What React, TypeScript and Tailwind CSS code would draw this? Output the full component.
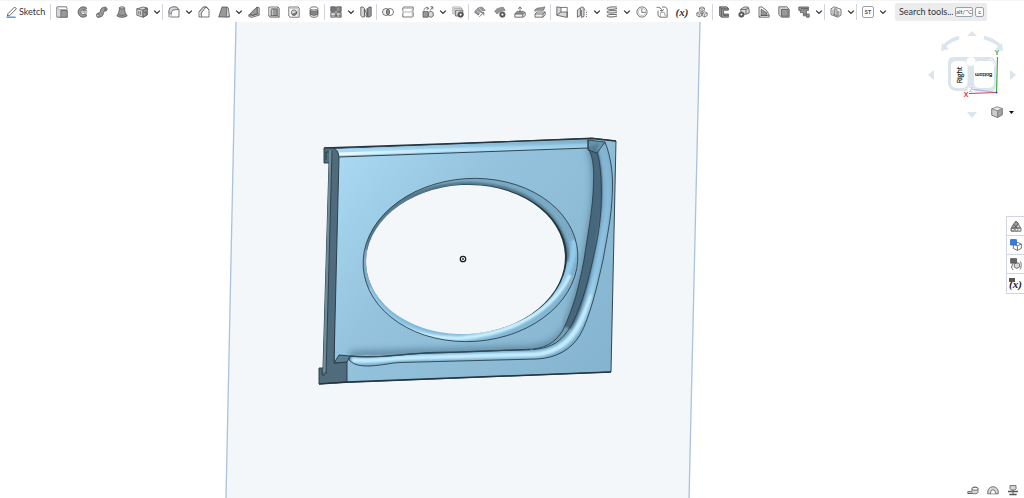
import type { ReactNode } from 'react';

const DARK = '#555';
const MID = '#999';
const LIGHT = '#d8d8d8';

interface Tool {
  name: string;
  icon: ReactNode;
  menu?: boolean;
}

function Icon({ children }: { children: ReactNode }) {
  return (
    <svg viewBox="0 0 12 12" className="w-3 h-3" fill="none" stroke={DARK} strokeWidth="0.8" strokeLinejoin="round" aria-hidden="true">
      {children}
    </svg>
  );
}

const groups: Tool[][] = [
  [
    {
      name: 'Extrude',
      icon: (
        <>
          <path d="M0.8 11.2V1.5Q0.8 0.8 1.5 0.8H10.5L11.2 3" />
          <path d="M0.8 1.5L3.5 4M3 11V3.5H11.2" stroke={MID} />
          <path d="M4.8 4.5H11.3V11.3H4.8Z" fill={MID} />
          <path d="M1 11.2H5" />
        </>
      ),
    },
    {
      name: 'Revolve',
      icon: (
        <>
          <path d="M10.8 2.2A5.2 5.2 0 1 0 10.8 9.8L8.8 8.2A2.6 2.6 0 1 1 8.8 3.8Z" fill={MID} />
          <path d="M6 6H11.3M6.5 4.5L11 4.2M8 8H11" strokeWidth="0.8" />
        </>
      ),
    },
    {
      name: 'Sweep',
      icon: (
        <>
          <path d="M0.6 8.2C2 6.6 4 7.4 4.4 5C4.8 2 6.5 1 9.6 1.2L11.4 2.8L10.2 5C7.5 4.6 7.8 6 7.3 8C6.7 10.8 4 11.4 1.6 11.2Z" fill={MID} />
          <path d="M9.4 1.2L8.8 4.6" />
          <ellipse cx="1.9" cy="9.6" rx="1.3" ry="1.6" fill={LIGHT} />
        </>
      ),
    },
    {
      name: 'Loft',
      icon: (
        <>
          <path d="M3.4 1.8C3.4 5 2.6 8 0.8 9.8C3 11.8 9 11.8 11.2 9.8C9.4 8 8.6 5 8.6 1.8Z" fill={MID} />
          <ellipse cx="6" cy="1.9" rx="2.6" ry="1.1" fill={LIGHT} />
          <path d="M2 8.5Q6 10.5 10 8.5" strokeWidth="0.6" />
        </>
      ),
    },
    {
      name: 'Thicken',
      menu: true,
      icon: (
        <>
          <path d="M0.8 2.8L7.5 1L11.2 2L11.2 9L7 11.2L0.8 9.2Z" fill={LIGHT} />
          <path d="M0.8 2.8L7 4.2L11.2 2M7 4.2V11.2" />
          <path d="M7 4.2L11.2 2V9L7 11.2Z" fill={MID} />
          <path d="M2.8 5V8.4M4.6 5.4V8.8M8.2 6.5L10 5.8V8.2" />
        </>
      ),
    },
  ],
  [
    {
      name: 'Fillet',
      menu: true,
      icon: (
        <>
          <path d="M1 11V5Q1 1 5 1H8.6L11 3.6V11H3.2" />
          <path d="M1 11H3.2V7.4Q3.2 3.6 7 3.6H11" stroke={MID} />
          <path d="M1 5.4Q1 1 5.4 1H8.4L10.6 3.6H7Q3.2 3.6 3.2 8L1 7Z" fill={LIGHT} strokeWidth="0.6" />
        </>
      ),
    },
    {
      name: 'Chamfer',
      icon: (
        <>
          <path d="M1 11V6L5.4 1H8.8L11 4V11Z" />
          <path d="M1 6L5.4 1H8L3.4 7V11" fill={LIGHT} />
          <path d="M8 1L11 4" />
        </>
      ),
    },
    {
      name: 'Draft',
      menu: true,
      icon: (
        <>
          <path d="M4 1H9L11.3 11H0.7Z" fill={MID} />
          <path d="M9 1L10.4 2L11.4 10.6L8.2 11Z" fill={LIGHT} strokeWidth="0.7" />
        </>
      ),
    },
    {
      name: 'Rib',
      icon: (
        <>
          <path d="M0.8 8.8L9 6.6V1L11.2 1.8V9.2L3.4 11.4L0.8 10.4Z" fill={LIGHT} />
          <path d="M9 1.2C8.2 2.4 4 4.6 2.2 8L4.6 9.4L9.4 7.8Z" fill={MID} />
          <path d="M1 8.8L3.6 9.8L11 7.6" strokeWidth="0.7" />
        </>
      ),
    },
    {
      name: 'Shell',
      icon: (
        <>
          <path d="M0.8 1H10L11.2 2.2V11.2H2L0.8 10Z" />
          <path d="M3 2.8H9.2V9.6H3Z" fill={MID} />
          <path d="M3 2.8L4.4 4V9.6" stroke={LIGHT} />
          <path d="M10 1V10H0.8M10 10L11.2 11.2" strokeWidth="0.6" />
        </>
      ),
    },
    {
      name: 'Hole',
      icon: (
        <>
          <path d="M0.8 1H10L11.2 2.2V11.2H2L0.8 10Z" />
          <path d="M2 2.6H9.8V10" stroke={MID} strokeWidth="0.6" />
          <circle cx="6" cy="6.6" r="2.7" fill={LIGHT} />
          <path d="M4 8.4A2.7 2.7 0 0 0 8.6 6.2Q7 7.6 4 8.4Z" fill={MID} />
        </>
      ),
    },
    {
      name: 'External thread',
      icon: (
        <>
          <path d="M2.2 2.4V9.6C2.2 11.8 9.8 11.8 9.8 9.6V2.4" fill="#f0f0f0" />
          <path d="M2.2 4.6Q6 6.6 9.8 4.6V8.4Q6 10.4 2.2 8.4Z" fill={MID} />
          <ellipse cx="6" cy="2.4" rx="3.8" ry="1.6" fill="#fff" />
          <path d="M2.2 6.4Q6 8.4 9.8 6.4" strokeWidth="0.6" />
        </>
      ),
    },
  ],
  [
    {
      name: 'Linear pattern',
      menu: true,
      icon: (
        <>
          <path d="M0.8 0.8H5.4V5.4H0.8Z" fill="#777" />
          <path d="M6.6 0.8H11.2V5.4H6.6Z" fill={MID} />
          <path d="M0.8 6.6H5.4V11.2H0.8ZM6.6 6.6H11.2V11.2H6.6Z" fill={LIGHT} />
          <path d="M0.8 9.8H11.2M9.9 1V11" strokeWidth="0.6" />
        </>
      ),
    },
    {
      name: 'Mirror',
      icon: (
        <>
          <path d="M0.8 1H3L4.4 2.4V11H2.2L0.8 9.6Z" fill={LIGHT} />
          <path d="M4.6 3L7.2 9.8V2.4L7.2 11.2L4.6 9Z" />
          <path d="M7.8 2.4L9.2 1H11.2V9.6L9.8 11H7.8Z" fill={MID} />
        </>
      ),
    },
  ],
  [
    {
      name: 'Boolean',
      icon: (
        <>
          <circle cx="4" cy="6" r="3.5" fill="#eee" />
          <circle cx="8" cy="6" r="3.5" />
          <path d="M6 3.1A3.5 3.5 0 0 1 6 8.9A3.5 3.5 0 0 1 6 3.1Z" fill={MID} />
        </>
      ),
    },
    {
      name: 'Split',
      icon: (
        <>
          <path d="M0.8 5V1.8L2 1H11.2V4M0.8 7.4V11H10.4L11.2 10.2V6.6" />
          <path d="M0.8 6.6C4 4.6 7 7.8 11.2 4.6" stroke={MID} />
          <path d="M1 2.4H10.2V10.4M1 5V8M11.2 4V7" stroke={MID} strokeWidth="0.6" />
        </>
      ),
    },
    {
      name: 'Transform',
      menu: true,
      icon: (
        <>
          <path d="M1 5.6H6.2V11.2H1Z" fill={MID} />
          <path d="M6.4 6.6L8.8 5.2L11.2 6.6V10L8.8 11.4L6.4 10Z" fill={LIGHT} />
          <path d="M2 4.6C2 2 4.4 0.8 6.6 2.4M5 0.8L6.8 2.6L4.6 3.4" />
          <path d="M8 4.6L10.6 1M10.8 3.4V0.8H8.4" />
        </>
      ),
    },
    {
      name: 'Delete part',
      icon: (
        <>
          <path d="M0.8 8V1H8.6L10 3" stroke={MID} />
          <path d="M2.2 9V2.6H9.8L10.4 4.4" stroke={MID} />
          <path d="M3.6 4.2H10.8V10H3.6Z" fill={LIGHT} />
          <circle cx="8.6" cy="8.6" r="2.7" fill={DARK} />
          <circle cx="8.6" cy="8.6" r="1.1" fill="#fff" stroke="none" />
        </>
      ),
    },
  ],
  [
    {
      name: 'Modify fillet',
      icon: (
        <>
          <path d="M0.6 6.4C2 2.6 5 0.8 8.2 1.2L11.2 4.4C8 4.4 5.4 6 4.4 9.2Z" fill={MID} strokeWidth="0.5" />
          <path d="M2.4 4.2L6 7.2M5 2.2L8.2 5.2" stroke={LIGHT} />
          <path d="M5.4 10.8L9.6 6.6M7 6.6H9.8V9.4" />
        </>
      ),
    },
    {
      name: 'Delete face',
      icon: (
        <>
          <path d="M0.6 5C3 3.6 5 1 9.4 1.4L11.2 4.6C7.4 4.4 5 6.4 3 8Z" fill={MID} strokeWidth="0.5" />
          <path d="M2 3.2L9 1.2" stroke={MID} />
          <circle cx="8.4" cy="8.6" r="2.7" fill={DARK} />
          <circle cx="8.4" cy="8.6" r="1.1" fill="#fff" stroke="none" />
        </>
      ),
    },
    {
      name: 'Move face',
      icon: (
        <>
          <path d="M0.8 8L3 5.4H9.4L11.2 6.6V9.6L9 11.2H0.8Z" fill="#eee" />
          <path d="M0.8 8H8.8L11.2 6.6M8.8 8V11" />
          <path d="M2.6 6.4H9.4L8.6 7.6H1.6Z" fill={MID} strokeWidth="0.5" />
          <path d="M6 6V1M4.2 2.8L6 0.8L7.8 2.8" />
        </>
      ),
    },
    {
      name: 'Replace face',
      icon: (
        <>
          <path d="M0.8 4C3 1 6 2.4 11 0.8L9.6 4.2C6.6 5 4 3.4 0.8 5.4Z" fill={MID} strokeWidth="0.5" />
          <path d="M1 8L3 6H11.2V9L9 11.2H1Z" fill="#eee" />
          <path d="M1 8H9L11.2 6M9 8V11.2" />
        </>
      ),
    },
  ],
  [
    {
      name: 'Plane',
      icon: (
        <>
          <path d="M0.8 0.8L5 1.6V6H11.2V11.4L6 10.4L0.8 9.2Z" fill={LIGHT} />
          <path d="M5 1.4H11.2V11.2M0.8 9L5 6" />
        </>
      ),
    },
    {
      name: 'Enclose',
      menu: true,
      icon: (
        <>
          <path d="M1.4 11.2V4L4.4 1.8V9.6Z" fill={LIGHT} />
          <path d="M4.4 2L6 0.8L8 2V10.4L5.4 11.4V4" fill={LIGHT} />
          <path d="M8.2 3L10.4 5V11" strokeDasharray="1 1" />
        </>
      ),
    },
    {
      name: 'Helix',
      menu: true,
      icon: (
        <path
          d="M10.8 1C4 0.6 0.6 1.6 1 2.6C1.6 3.8 8 3.4 11 2.6M10.8 4.8C4 4.4 0.6 5 1 6.2C1.6 7.4 8 7.2 11 6.2M10.8 8.6C4 8 0.6 9 1 10C1.6 11.4 8 11.2 11 10"
          strokeWidth="1"
        />
      ),
    },
    {
      name: 'Measure curve',
      icon: (
        <>
          <circle cx="6" cy="6" r="5.1" />
          <path d="M5.8 2.6V6.4H9.4" />
          <circle cx="6" cy="6" r="3.7" stroke={MID} strokeWidth="0.5" />
        </>
      ),
    },
    {
      name: 'Import',
      icon: (
        <>
          <path d="M2 4.6V9.6L4.4 11.2H11.2V3L9.4 1H6" />
          <path d="M4.4 11.2V6.4H8.6V9.2H11" stroke={MID} />
          <path d="M0.6 1.4C3.4 0.8 5.6 2.2 6 5M4 4.2L6.2 5.4L7.6 3.2" />
        </>
      ),
    },
    { name: 'Variable', icon: null },
    {
      name: 'Composite part',
      icon: (
        <>
          <path d="M6 0.8L8.4 2V4.4L6 5.6L3.6 4.4V2ZM3.4 5.8L5.8 7V9.6L3.2 11L0.8 9.6V7ZM8.6 5.8L11.2 7V9.6L8.6 11L6.2 9.6V7Z" fill="#f2f2f2" strokeWidth="0.7" />
          <path d="M3.6 2L6 3.2L8.4 2M6 3.2V5.6M0.8 7L3.2 8.2L5.8 7M3.2 8.2V11M6.2 7L8.6 8.2L11.2 7M8.6 8.2V11" strokeWidth="0.5" />
        </>
      ),
    },
  ],
  [
    {
      name: 'Sheet metal model',
      icon: (
        <>
          <path d="M1.6 0.8H8.6L10.4 2.2V4.2H5.6V8H10.4V11.2H3.6L1.6 9.6Z" fill={MID} />
          <path d="M3.4 11V2.8H10.2M1.6 0.8L3.4 2.8M5.6 8V9.4H10.2" />
        </>
      ),
    },
    {
      name: 'Flange',
      icon: (
        <>
          <path d="M2.6 3.4L6 1H10L11.2 4V7L8.2 8.2H3.4Z" fill={LIGHT} />
          <path d="M2.6 3.4H8L11 2M8 3.4V8" />
          <circle cx="3.4" cy="8.6" r="2.6" fill={DARK} />
          <circle cx="3.4" cy="8.6" r="1" fill="#fff" stroke="none" />
        </>
      ),
    },
    {
      name: 'Hem',
      icon: (
        <>
          <path d="M1 11.2V1.2L3.6 0.8L8.4 4.2L11.2 9V11.2Z" fill="#eee" />
          <path d="M3.2 9.4V3.4L8.4 6.6L9 9.4Z" fill={MID} />
          <path d="M1 11L3.2 9.4H11" strokeWidth="0.7" />
        </>
      ),
    },
    {
      name: 'Make joint',
      icon: (
        <>
          <path d="M0.8 0.8H8.6L11.2 3.2V11.2H3.4L0.8 8.6Z" fill={LIGHT} />
          <path d="M3.4 3.4H10.2V10.2H3.4Z" fill={MID} />
        </>
      ),
    },
    {
      name: 'Bend',
      menu: true,
      icon: (
        <>
          <path d="M0.8 1H10.4V4.4H0.8Z" fill={MID} />
          <path d="M2.4 4.4V6.6H5.4V9.8H8.6V11.2H11.2V8H8.4V4.6" fill={MID} />
          <path d="M3 2.6H10M6.2 7.4L9 9.4" />
        </>
      ),
    },
  ],
  [
    {
      name: 'Frame',
      menu: true,
      icon: (
        <>
          <path d="M1 2.8L4.4 0.8L11 3.4V9L8 11.2L1 8.6Z" fill="#f6f6f6" />
          <path d="M3 3.6V8L5 9V2.4M7 4.8V10.6M8.8 5V10" strokeWidth="0.7" />
          <path d="M4.8 2.6L7 3.4V10L4.8 9Z" fill={LIGHT} strokeWidth="0.6" />
        </>
      ),
    },
  ],
];

function Chevron() {
  return (
    <svg viewBox="0 0 8 8" className="w-2 h-2" fill="none" stroke="#333" strokeWidth="1.3" aria-hidden="true">
      <path d="M1.2 2.6L4 5.4L6.8 2.6" />
    </svg>
  );
}

function Divider() {
  return <span className="w-0.5 h-4 border-l border-gray-300 shrink-0" />;
}

function MenuArrow({ name }: { name: string }) {
  return (
    <button aria-label={`${name} menu`} className="w-2.5 h-5 flex items-center justify-center shrink-0">
      <Chevron />
    </button>
  );
}

function Toolbar() {
  return (
    <header className="h-[22px] bg-white border-t border-gray-100 flex items-center shrink-0 overflow-hidden">
      <button className="w-[50px] pl-1.5 flex items-center gap-px text-[9px] text-[#333] shrink-0">
        <svg viewBox="0 0 12 12" className="w-3 h-3 shrink-0" fill="none" stroke={DARK} strokeWidth="0.9" aria-hidden="true">
          <path d="M1.4 10L2 7.6L8.6 1L10.4 2.8L3.8 9.4Z" />
          <path d="M0.6 11.2H9.6" stroke="#3b7ddd" strokeWidth="1.2" />
        </svg>
        Sketch
      </button>
      {groups.map((tools, i) => (
        <div key={i} className="flex items-center shrink-0">
          <Divider />
          {tools.map((tool) => (
            <div key={tool.name} className="flex items-center">
              <button aria-label={tool.name} title={tool.name} className="w-5 h-5 flex items-center justify-center">
                {tool.icon ? (
                  <Icon>{tool.icon}</Icon>
                ) : (
                  <span className="font-['Liberation_Serif',serif] font-bold italic text-[11px] leading-3 text-[#333]">(x)</span>
                )}
              </button>
              {tool.menu && <MenuArrow name={tool.name} />}
            </div>
          ))}
        </div>
      ))}
      <Divider />
      <button aria-label="Custom feature ST" className="w-5 h-5 flex items-center justify-center shrink-0">
        <span className="w-3 h-3 border border-gray-400 rounded-xs flex items-center justify-center text-[6px] leading-none font-bold text-[#555]">
          ST
        </span>
      </button>
      <MenuArrow name="Custom features" />
      <label className="ml-[7px] h-[18px] w-[92px] bg-[#ececec] rounded-xs pl-1 flex items-center gap-0.5 shrink-0">
        <input
          aria-label="Search tools"
          placeholder="Search tools..."
          className="w-[54px] bg-transparent text-[9px] text-[#333] placeholder:text-[#333] outline-none"
        />
        <kbd className="h-2.5 border border-gray-400 rounded-xs bg-gray-50 font-['Lato','DejaVu_Sans',sans-serif] text-[6px] leading-2 text-[#444]">
          alt/⌥
        </kbd>
        <kbd className="h-2.5 px-0.5 border border-gray-400 rounded-xs bg-gray-50 font-['Lato',sans-serif] text-[6px] leading-2 text-[#444]">
          c
        </kbd>
      </label>
    </header>
  );
}

function Model() {
  const edge = '#24353f';
  const channel =
    'M588 148C594 158 594 172 593.5 183C593 210 587 238 584 260C579 286 574 307 563 330C555 344 543 349 527 349.5L460 352C440 353 425 353 410 354C395 356 370 358 350 356L349 360C355 366 362 366 370 366C385 365 390 363 400 362.5L537 359C556 358 571 350 580 335C590 317 597 287 603 260C608 232 613 210 612.5 180C612 165 609 152 605 142L588 140Z';
  const ridge = 'M602 146C610 175 609 205 604 232C599 262 592 300 580 324C569 346 553 353 534 354.5L400 358C385 359 370 363 352 360';
  const wall = 'M592 146C600 168 597 205 592 235C587 268 580 300 568 328';

  return (
    <svg viewBox="0 22 1024 476" preserveAspectRatio="xMidYMid slice" className="w-full h-full" role="img" aria-label="Part model">
      <defs>
        <linearGradient id="face" x1="340" y1="160" x2="610" y2="370" gradientUnits="userSpaceOnUse">
          <stop offset="0" stopColor="#a8d8f2" />
          <stop offset="0.35" stopColor="#95c3dd" />
          <stop offset="1" stopColor="#85b4d0" />
        </linearGradient>
        <linearGradient id="lip" x1="0" y1="0" x2="0.04" y2="1">
          <stop offset="0" stopColor="#75a4be" />
          <stop offset="0.6" stopColor="#a9dcf8" />
          <stop offset="1" stopColor="#90c2df" />
        </linearGradient>
        <linearGradient id="lipGlow" x1="339" y1="0" x2="540" y2="0" gradientUnits="userSpaceOnUse">
          <stop offset="0" stopColor="#eefcff" />
          <stop offset="1" stopColor="#a5dbf8" stopOpacity="0.3" />
        </linearGradient>
        <linearGradient id="ring" x1="0" y1="178" x2="0" y2="342" gradientUnits="userSpaceOnUse">
          <stop offset="0" stopColor="#7aa9c4" />
          <stop offset="0.5" stopColor="#7cacc7" />
          <stop offset="1" stopColor="#83b9d8" />
        </linearGradient>
        <linearGradient id="ridgeTone" x1="0" y1="145" x2="0" y2="360" gradientUnits="userSpaceOnUse">
          <stop offset="0" stopColor="#83b3cf" />
          <stop offset="0.6" stopColor="#90c7e6" />
          <stop offset="0.85" stopColor="#b9e4fb" />
          <stop offset="1" stopColor="#b0e0fa" />
        </linearGradient>
        <filter id="soft1" x="-20%" y="-20%" width="140%" height="140%">
          <feGaussianBlur stdDeviation="1.2" />
        </filter>
        <filter id="soft3" x="-20%" y="-20%" width="140%" height="140%">
          <feGaussianBlur stdDeviation="3" />
        </filter>
        <clipPath id="channelClip">
          <path d={channel} />
        </clipPath>
        <clipPath id="ringClip">
          <ellipse cx="470.5" cy="260" rx="107.5" ry="81.5" transform="rotate(-4 470.5 260)" />
        </clipPath>
        <clipPath id="innerFace">
          <path d="M339 157L588 148C594 158 594 172 593.5 183C593 210 587 238 584 260C579 286 574 307 563 330C555 344 543 349 527 349.5L460 352C420 353 400 356 340 355Z" />
        </clipPath>
      </defs>

      {/* Sketch plane */}
      <path d="M236 22L700 22L689 499L226 499Z" fill="#f3f7fa" />
      <path d="M236 22L226 499M700 22L689 499" stroke="#abc2dd" strokeWidth="1.3" />

      {/* Body */}
      <path d="M328 149L592 138L616 141L611 372L334 383L334 160Z" fill="url(#face)" stroke={edge} strokeWidth="0.9" />
      <g clipPath="url(#innerFace)" fill="none">
        <path d={wall} stroke="#4d7288" strokeWidth="11" opacity="0.65" filter="url(#soft3)" />
        <path d="M569 326C559 343 546 349 527 350L350 355" stroke="#4d7288" strokeWidth="9" opacity="0.6" filter="url(#soft3)" />
      </g>

      {/* Top lip */}
      <path d="M332 149L588 140V148L339 157Z" fill="url(#lip)" />
      <path d="M339 154L588 145" stroke="url(#lipGlow)" strokeWidth="3" />
      <path d="M339 157L588 148" stroke={edge} strokeWidth="0.9" />
      <path d="M324 148L470 143L592 138.5L616 141" stroke={edge} strokeWidth="1.4" fill="none" />

      {/* Channel running down the right side and along the bottom */}
      <path d={channel} fill="#739fb8" />
      <g clipPath="url(#channelClip)" fill="none">
        <path d={wall} stroke="#46677b" strokeWidth="13" filter="url(#soft1)" />
        <path d={ridge} stroke="#7eb2d0" strokeWidth="10" filter="url(#soft1)" />
        <path d={ridge} stroke="url(#ridgeTone)" strokeWidth="5" filter="url(#soft1)" />
        <path d="M591 295C580 328 566 350 540 354L440 357C400 357 385 361 352 360" stroke="#d4f4ff" strokeWidth="2.5" opacity="0.8" filter="url(#soft1)" />
      </g>
      <path d="M588 140L605 142L597 153L588 150Z" fill="#5f8ba4" opacity="0.6" />
      <path d={channel} fill="none" stroke={edge} strokeWidth="0.8" />
      <path d="M597 153C601 163 602 188 601 207C600 226 597 242 594.5 252C589 278 583 302 573 322C563 341 552 348 533 349.5M588 150L597 153L605 142M588 140V150" fill="none" stroke={edge} strokeWidth="0.8" />
      <path d="M350 356C390 359 395 352 460 352L530 349.5" fill="none" stroke="#2f4a59" strokeWidth="1.3" />

      {/* Oval opening */}
      <ellipse cx="470.5" cy="260" rx="107.5" ry="81.5" transform="rotate(-4 470.5 260)" fill="url(#ring)" />
      <g clipPath="url(#ringClip)" fill="none">
        <path d="M368 250C372 205 425 184 470 184C525 185 566 215 568 262" stroke="#41616f" strokeWidth="4" opacity="0.75" filter="url(#soft1)" />
        <path d="M574 240C576 285 530 333 462 338C420 340 382 320 368 288" stroke="#92cbeb" strokeWidth="6" filter="url(#soft1)" />
        <path d="M570 275C556 305 520 333 462 338C440 339 420 335 402 327" stroke="#d6f5ff" strokeWidth="3" filter="url(#soft1)" />
      </g>
      <ellipse cx="470.5" cy="260" rx="107.5" ry="81.5" transform="rotate(-4 470.5 260)" fill="none" stroke={edge} strokeWidth="0.8" />
      <ellipse cx="466.5" cy="259" rx="100.5" ry="74.5" transform="rotate(-3 466.5 259)" fill={edge} />
      <ellipse cx="465.5" cy="259.5" rx="99.5" ry="74.5" transform="rotate(-3 465.5 259.5)" fill="#f3f7fa" />

      {/* Left rail with its hooks */}
      <path d="M324 148L333 148Q338 149 339 157L334 363L347 362V382L319 384V368H323L329 163H324Z" fill="#506b7b" stroke={edge} strokeWidth="0.9" />
      <path d="M329 150L332 151L326 372H323L329 163Z" fill="#6e8c9c" />
      <path d="M332 151L326 374M326 160V152H329M322 369V375H325" fill="none" stroke={edge} strokeWidth="0.8" />
      <path d="M334 363L339 355L350 356L347 362Z" fill="#5b8197" stroke={edge} strokeWidth="0.9" />
      <path d="M319 384L347 382L611 372" stroke={edge} strokeWidth="1.5" fill="none" />

      {/* Origin */}
      <circle cx="463" cy="259" r="2.7" fill="#fff" stroke="#1c1c1c" strokeWidth="1.3" />
      <circle cx="463" cy="259" r="0.9" fill="#1c1c1c" />
    </svg>
  );
}

function ViewCube() {
  return (
    <svg viewBox="924 28 96 94" className="absolute top-1.5 right-1 w-24 h-[94px]" role="img" aria-label="View cube">
      <g fill="#dce4ec">
        <path d="M972 31L977 36H967ZM928 75L934 70V80ZM1016 75L1010 70V80ZM972 118L967 112H977Z" />
        <path d="M941 51L942 43L949 49ZM1003 51L1002 43L995 49Z" />
      </g>
      <path d="M959 37.5Q950 40 944.5 46M984 37.5Q994 40 1000 46" fill="none" stroke="#dce4ec" strokeWidth="3.5" />
      <path d="M953 57H990Q996 58 996 64V86Q995 92 989 92L956 91Q949 90 948 84V62Q949 57 953 57Z" fill="#dce4ec" />
      <rect x="951" y="61" width="16.5" height="27" rx="5" fill="#fff" />
      <rect x="974" y="61" width="20" height="27" rx="5" fill="#fff" />
      <circle cx="971" cy="61.5" r="4.5" fill="#fff" />
      <circle cx="971" cy="90" r="3.5" fill="#fff" />
      <path d="M989 59Q994 60 995 66" stroke="#fff" strokeWidth="1" fill="none" />
      <g className="font-['Open_Sans',sans-serif]" fill="#222" textAnchor="middle">
        <text fontSize="7" stroke="#222" strokeWidth="0.2" transform="translate(961.5 75) rotate(-90)">Right</text>
        <text fontSize="5" stroke="#222" strokeWidth="0.2" transform="translate(983.5 73) rotate(180)">Bottom</text>
      </g>
      <path d="M996.5 92.5L971 89" stroke="#aab0f0" strokeWidth="1" />
      <path d="M997.5 57L996.5 93" stroke="#3fae49" strokeWidth="1.2" />
      <path d="M996.5 92.5L969 93.5" stroke="#c8405a" strokeWidth="1.2" />
      <circle cx="996.5" cy="92.5" r="0.9" fill="#2b3bd0" />
      <g className="font-['Open_Sans',sans-serif]" fontSize="7" fontWeight="700" textAnchor="middle">
        <text x="997" y="55" fill="#3fae49">Y</text>
        <text x="966" y="97" fill="#e03c3c">X</text>
        <text x="971" y="92" fill="#b4b8f2" fontWeight="400">Z</text>
      </g>
    </svg>
  );
}

const panels = [
  {
    name: 'Appearances',
    icon: (
      <>
        <path d="M6 1L8.4 3.6L6 6.8L3.2 4.6Z" fill={MID} />
        <path d="M3.6 4.4L6 7L3 9L1.6 7Z" fill={MID} />
        <path d="M8.2 3.6L10.6 8H6Z" fill={LIGHT} />
        <path d="M1 8.2H11V11.2H1Z" fill="#eee" />
        <circle cx="3" cy="9.6" r="1.5" strokeWidth="0.6" />
        <circle cx="6.6" cy="9.6" r="1.5" strokeWidth="0.6" />
      </>
    ),
  },
  {
    name: 'Configurations',
    icon: (
      <>
        <path d="M7 3.2L11.3 5V9.4L7.4 11.4L3.4 9.4V5Z" fill="#fff" />
        <path d="M3.4 5L7.4 6.8L11.3 5M7.4 6.8V11.4" />
        <path d="M0.6 0.6H6.4V6H0.6Z" fill="#3b7ddd" stroke="#2a62b8" />
      </>
    ),
  },
  {
    name: 'Custom tables',
    icon: (
      <>
        <path d="M6.8 4.6L9.6 5.8V9L6.8 10.4L4.2 9V5.8Z" fill={LIGHT} />
        <path d="M3 6Q1.8 6 2.2 8Q2 9 1 9Q2.2 9.4 2.2 10.4Q2 11.4 3.4 11.4M10.2 3.6Q11.2 3.6 11 5.4Q11 6.8 11.6 7Q11 7.4 11 9Q11 11.4 9.8 11.4" />
        <path d="M0.6 0.6H6.6V5.2H0.6Z" fill="#666" />
      </>
    ),
  },
  { name: 'Variables', icon: null },
];

function SidePanel() {
  return (
    <nav className="absolute right-0 top-[194px] w-[18px] border border-r-0 border-gray-300 bg-white divide-y divide-gray-300">
      {panels.map((panel) => (
        <button key={panel.name} aria-label={panel.name} title={panel.name} className="w-full h-[19px] flex items-center justify-center">
          {panel.icon ? (
            <Icon>{panel.icon}</Icon>
          ) : (
            <span className="relative font-['Liberation_Serif',serif] font-bold italic text-[11px] leading-3 text-[#222]">
              (x)
              <span className="absolute left-0 top-0 w-1.5 h-1 bg-[#555]" />
            </span>
          )}
        </button>
      ))}
    </nav>
  );
}

function MeasureBar() {
  return (
    <div className="absolute right-[5px] bottom-0.5 flex gap-2">
      <button aria-label="Measure">
        <Icon>
          <path d="M5 4.6C5 2.6 11 2.6 11 4.6V8.4C10.6 10 6.6 10.2 5.4 9.2L0.8 9.6V7.6L5 7.2Z" fill={LIGHT} />
          <ellipse cx="8" cy="4.8" rx="3" ry="1.5" fill="#fff" />
          <path d="M1 9.4H6" />
        </Icon>
      </button>
      <button aria-label="Protractor">
        <Icon>
          <path d="M0.7 9.8V8A5.3 5.3 0 0 1 11.3 8V9.8Z" fill={LIGHT} />
          <path d="M3.6 9.6V8.2A2.4 2.4 0 0 1 8.4 8.2V9.6" fill="#fff" />
        </Icon>
      </button>
      <button aria-label="Mass properties">
        <Icon>
          <path d="M3 1.6H9V4.6L7.8 6H4.2L3 4.6Z" fill={LIGHT} />
          <path d="M1 7.6H11M2.4 10.4H9.6" strokeWidth="1.5" />
          <path d="M6 6V10" />
        </Icon>
      </button>
    </div>
  );
}

export default function App() {
  return (
    <div className="h-screen flex flex-col bg-white font-['Lato',sans-serif] overflow-hidden">
      <Toolbar />
      <main className="relative flex-1 min-h-0">
        <Model />
        <ViewCube />
        <button aria-label="View options" className="absolute right-2.5 top-[84px] flex items-center gap-1.5">
          <svg viewBox="0 0 12 12" className="w-3 h-3" stroke="#777" strokeWidth="0.8" strokeLinejoin="round" aria-hidden="true">
            <path d="M0.8 2.8L6 0.8L11.2 2.4V8.8L6.6 11.4L0.8 9.2Z" fill="#e8e8e8" />
            <path d="M6.6 4.8L11.2 2.4V8.8L6.6 11.4Z" fill="#a4a4a4" />
            <path d="M0.8 2.8L6.6 4.8V11.4L0.8 9.2Z" fill="#cdcdcd" />
          </svg>
          <svg viewBox="0 0 5 3" className="w-[5px] h-[3px]" aria-hidden="true">
            <path d="M0 0H5L2.5 3Z" fill="#111" />
          </svg>
        </button>
        <SidePanel />
        <MeasureBar />
      </main>
    </div>
  );
}
